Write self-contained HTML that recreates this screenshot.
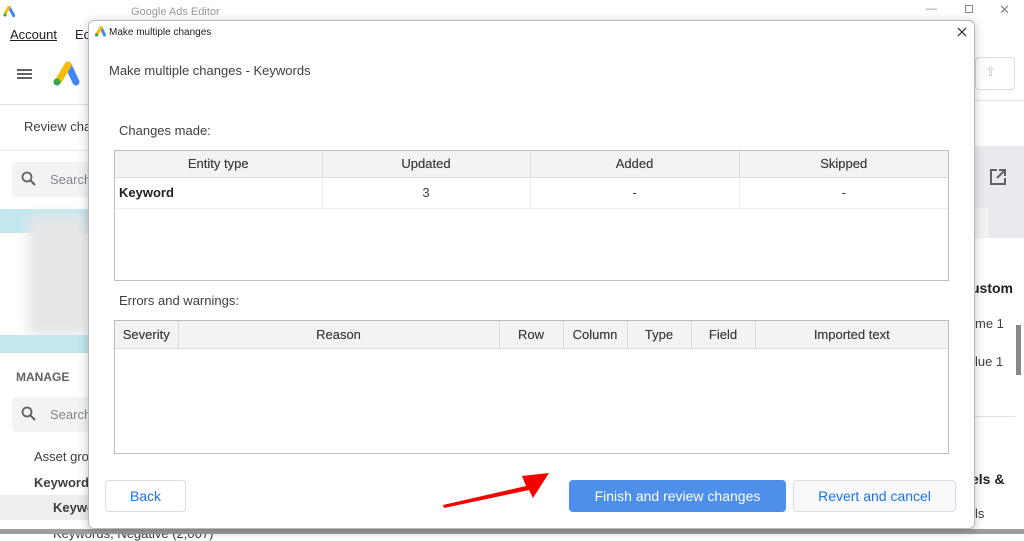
<!DOCTYPE html>
<html><head><meta charset="utf-8"><style>
*{box-sizing:border-box;margin:0;padding:0}
body{width:1024px;height:534px;position:relative;overflow:hidden;background:#fff;font-family:"Liberation Sans",Arial,sans-serif;color:#3c4043}
.a{position:absolute}
table{border-collapse:collapse;position:absolute;font-size:13px}
td,th{border-right:1px solid #dadce0;text-align:center;padding:0}
th{background:#f1f3f4;font-weight:normal;color:#3c4043;border-bottom:1px solid #dadce0;text-shadow:0 0 0.4px #3c4043}
</style></head><body>
<div class="a" style="left:0;top:0;width:1024px;height:22px;background:#fff"></div>
<svg class="a" style="left:3px;top:6px" width="12" height="11"><path d="M6 1L11 10" stroke="#4285f4" stroke-width="3" stroke-linecap="round"/><path d="M6 1L2 8" stroke="#fbbc04" stroke-width="3" stroke-linecap="round"/><circle cx="2" cy="9" r="1.6" fill="#34a853"/></svg>
<div class="a" style="left:131px;top:6px;font-size:11px;color:#999">Google Ads Editor</div>
<div class="a" style="left:926px;top:3px;font-size:11px;color:#888">—</div>
<div class="a" style="left:965px;top:5px;width:8px;height:8px;border:1px solid #888"></div>
<div class="a" style="left:999px;top:2px;font-size:13px;color:#888">✕</div>
<div class="a" style="left:10px;top:27px;font-size:13px;color:#202124;text-decoration:underline">Account</div>
<div class="a" style="left:75px;top:27px;font-size:13px;color:#202124">Ec</div>
<div class="a" style="left:17px;top:69px;width:15px;height:2px;background:#5f6368;box-shadow:0 4px 0 #5f6368,0 8px 0 #5f6368"></div>
<svg class="a" style="left:50px;top:60px" width="30" height="28"><path d="M18 5L26 22" stroke="#4285f4" stroke-width="7" stroke-linecap="round"/><path d="M18 5L9 20" stroke="#fbbc04" stroke-width="7" stroke-linecap="round"/><circle cx="7" cy="22" r="3.6" fill="#34a853"/></svg>
<div class="a" style="left:0;top:104px;width:90px;height:1px;background:#e0e0e0"></div>
<div class="a" style="left:24px;top:119px;font-size:13px;color:#3c4043">Review cha</div>
<div class="a" style="left:0;top:150px;width:90px;height:1px;background:#e8e8e8"></div>
<div class="a" style="left:12px;top:162px;width:80px;height:35px;background:#f1f3f4;border-radius:4px"></div>
<svg class="a" style="left:21px;top:171px" width="16" height="16"><circle cx="6" cy="6" r="4.5" fill="none" stroke="#5f6368" stroke-width="1.8"/><path d="M9.5 9.5L14 14" stroke="#5f6368" stroke-width="2"/></svg>
<div class="a" style="left:50px;top:172px;font-size:13px;color:#80868b">Search</div>
<div class="a" style="left:0;top:209px;width:90px;height:24px;background:#c2e7ef"></div>
<div class="a" style="left:28px;top:215px;width:60px;height:120px;background:#e6e6e6;filter:blur(6px)"></div>
<div class="a" style="left:0;top:335px;width:90px;height:18px;background:#c2e7ef"></div>
<div class="a" style="left:16px;top:370px;font-size:12px;font-weight:bold;color:#5f6368">MANAGE</div>
<div class="a" style="left:12px;top:397px;width:80px;height:35px;background:#f1f3f4;border-radius:4px"></div>
<svg class="a" style="left:21px;top:406px" width="16" height="16"><circle cx="6" cy="6" r="4.5" fill="none" stroke="#5f6368" stroke-width="1.8"/><path d="M9.5 9.5L14 14" stroke="#5f6368" stroke-width="2"/></svg>
<div class="a" style="left:50px;top:407px;font-size:13px;color:#80868b">Search</div>
<div class="a" style="left:34px;top:449px;font-size:13px">Asset gro</div>
<div class="a" style="left:34px;top:475px;font-size:13px;font-weight:bold">Keywords</div>
<div class="a" style="left:0;top:495px;width:90px;height:25px;background:#eee"></div>
<div class="a" style="left:53px;top:500px;font-size:13px;font-weight:bold">Keywo</div>
<div class="a" style="left:53px;top:526px;font-size:13px">Keywords, Negative (2,007)</div>
<div class="a" style="left:0;top:529px;width:1024px;height:5px;background:#9e9e9e"></div>
<div class="a" style="left:975px;top:57px;width:40px;height:33px;border:1px solid #dadce0;border-radius:4px"></div>
<div class="a" style="left:985px;top:64px;font-size:13px;color:#bbb">⇧</div>
<div class="a" style="left:975px;top:100px;width:49px;height:1px;background:#e0e0e0"></div>
<div class="a" style="left:975px;top:146px;width:49px;height:92px;background:#e8eaed"></div>
<div class="a" style="left:975px;top:208px;width:14px;height:30px;background:#f1f3f4"></div>
<svg class="a" style="left:989px;top:168px" width="18" height="18"><path d="M8 2H2V16H16V10" fill="none" stroke="#5f6368" stroke-width="2"/><path d="M10 2H16V8M16 2L8 10" fill="none" stroke="#5f6368" stroke-width="2"/></svg>
<div class="a" style="left:971px;top:280px;font-size:14px;font-weight:bold;color:#202124">ustom</div>
<div class="a" style="left:975px;top:316px;font-size:13px">me 1</div>
<div class="a" style="left:975px;top:354px;font-size:13px">lue 1</div>
<div class="a" style="left:1016px;top:325px;width:5px;height:50px;background:#888"></div>
<div class="a" style="left:975px;top:416px;width:40px;height:1px;background:#e0e0e0"></div>
<div class="a" style="left:971px;top:471px;font-size:14px;font-weight:bold;color:#202124">els &amp;</div>
<div class="a" style="left:975px;top:506px;font-size:13px">ls</div>
<div class="a" style="left:88px;top:20px;width:887px;height:509px;background:#fff;border:1px solid #bbb;border-radius:6px;box-shadow:0 2px 10px rgba(0,0,0,.25)"></div>
<svg class="a" style="left:94px;top:26px" width="12" height="11"><path d="M7 1.5L10.5 9" stroke="#4285f4" stroke-width="3" stroke-linecap="round"/><path d="M7 1.5L3 8" stroke="#fbbc04" stroke-width="3" stroke-linecap="round"/><circle cx="2.5" cy="9" r="1.6" fill="#34a853"/></svg>
<div class="a" style="left:109px;top:27px;font-size:10px;color:#202124">Make multiple changes</div>
<svg class="a" style="left:957px;top:27px" width="10" height="10"><path d="M1 1L9 9M9 1L1 9" stroke="#202124" stroke-width="1.2"/></svg>
<div class="a" style="left:109px;top:63px;font-size:13px;color:#3c4043">Make multiple changes - Keywords</div>
<div class="a" style="left:119px;top:123px;font-size:13px">Changes made:</div>
<div class="a" style="left:114px;top:150px;width:835px;height:131px;border:1px solid #bdbdbd"></div>
<table style="left:115px;top:151px;width:833px">
<tr style="height:26px"><th style="width:207px">Entity type</th><th style="width:208px">Updated</th><th style="width:209px">Added</th><th style="border-right:none">Skipped</th></tr>
<tr style="height:31px;border-bottom:1px solid #eee"><td style="text-align:left;padding-left:4px;font-weight:bold;color:#202124;border-right-color:#eee">Keyword</td><td style="border-right-color:#eee">3</td><td style="border-right-color:#eee">-</td><td style="border-right:none">-</td></tr>
</table>
<div class="a" style="left:119px;top:293px;font-size:13px">Errors and warnings:</div>
<div class="a" style="left:114px;top:320px;width:835px;height:134px;border:1px solid #bdbdbd"></div>
<table style="left:115px;top:321px;width:833px">
<tr style="height:27px"><th style="width:63px">Severity</th><th style="width:321px">Reason</th><th style="width:64px">Row</th><th style="width:64px">Column</th><th style="width:64px">Type</th><th style="width:64px">Field</th><th style="border-right:none">Imported text</th></tr>
</table>
<div class="a" style="left:105px;top:480px;width:81px;height:32px;border:1px solid #dadce0;border-radius:4px;color:#1a73e8;font-size:14px;text-align:center;line-height:30px">Back</div>
<div class="a" style="left:569px;top:480px;width:217px;height:32px;background:#4d8fea;border-radius:4px;color:#fff;font-size:14px;text-align:center;line-height:32px">Finish and review changes</div>
<div class="a" style="left:793px;top:480px;width:163px;height:32px;border:1px solid #dadce0;border-radius:4px;background:#f8f9fa;color:#1a73e8;font-size:14px;text-align:center;line-height:30px">Revert and cancel</div>
<svg class="a" style="left:440px;top:468px" width="112" height="44"><path d="M3 37L86 18L82 8L109 5L93 30L89 22L4 40Z" fill="#f40000"/></svg>
</body></html>
